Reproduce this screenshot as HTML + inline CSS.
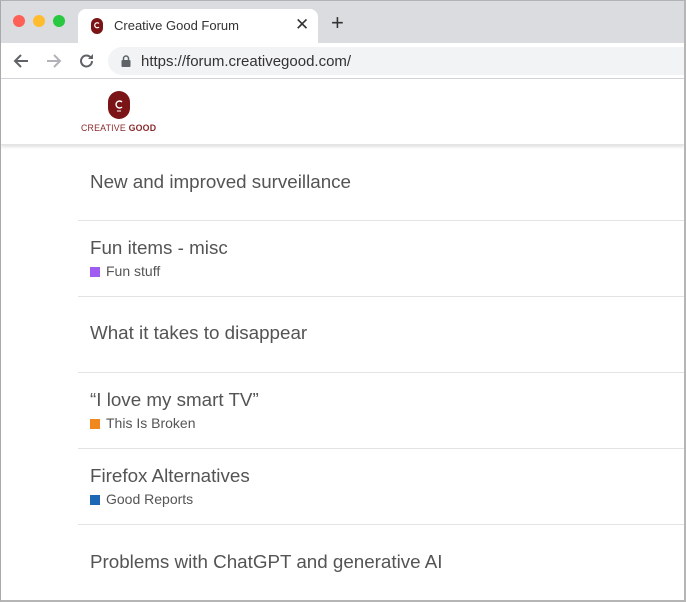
<!DOCTYPE html>
<html><head><meta charset="utf-8"><style>
*{margin:0;padding:0;box-sizing:border-box}
html,body{width:686px;height:602px;overflow:hidden;background:#fff;font-family:"Liberation Sans",Arial,sans-serif}
.win{position:absolute;left:0;top:0;width:686px;height:602px;border:1px solid #a9a9a9;border-top-color:#b0b2b5;border-bottom:2px solid #b5b5b5;border-right:2px solid #b5b5b5;overflow:hidden}
.tabbar{position:absolute;left:0;top:0;width:100%;height:42px;background:#dadce0}
.dot{position:absolute;top:14px;width:12px;height:12px;border-radius:50%}
.tab{position:absolute;left:77px;top:8px;width:240px;height:36px;background:#fff;border-radius:8px 8px 0 0}
.tab .t{position:absolute;left:36px;top:9px;font-size:13px;color:#333}
.tab .x{position:absolute;left:217px;top:6px;font-size:17px;color:#333}
.plus{position:absolute;left:330px;top:9px;font-size:22px;color:#333}
.toolbar{position:absolute;left:0;top:42px;width:100%;height:36px;background:#fff;border-bottom:1px solid #d4d4d8}
.url{position:absolute;left:107px;top:4px;width:600px;height:28px;border-radius:14px;background:#f1f3f4}
.url .t{position:absolute;left:33px;top:6px;font-size:15px;color:#333}
.hdr{position:absolute;left:0;top:78px;width:100%;height:66px;background:#fff;box-shadow:0 2px 3px rgba(0,0,0,.12);border-bottom:1px solid #e4e4e4}
.row{position:absolute;left:77px;width:620px;border-bottom:1px solid #e3e3e3}
.row .h{position:absolute;left:12px;font-size:18.8px;color:#545454}
.row .c{position:absolute;left:12px;font-size:14px;color:#555}
.row .c i{display:inline-block;width:10px;height:10px;margin-right:6px;vertical-align:-1px}
</style></head><body><div class="win">
<div class="tabbar">
<div class="dot" style="left:12px;background:#fe5f57"></div>
<div class="dot" style="left:32px;background:#febc2e"></div>
<div class="dot" style="left:52px;background:#28c840"></div>
<div class="tab">
<svg style="position:absolute;left:13px;top:9px" width="12" height="16"><rect x="0" y="0" width="12" height="16" rx="6" fill="#7a1416"/><path d="M8 5.5A2.5 2.5 0 1 0 8 9" stroke="#fff" stroke-width="1.2" fill="none"/></svg>
<span class="t">Creative Good Forum</span><span class="x">✕</span></div>
<span class="plus">+</span>
</div>
<div class="toolbar">
<svg style="position:absolute;left:11px;top:9px" width="18" height="18"><path d="M16 9H3M9 3L3 9l6 6" stroke="#5f6368" stroke-width="2" fill="none"/></svg>
<svg style="position:absolute;left:44px;top:9px" width="18" height="18"><path d="M2 9h13M9 3l6 6-6 6" stroke="#b0b3b7" stroke-width="2" fill="none"/></svg>
<svg style="position:absolute;left:77px;top:9px" width="18" height="18"><path d="M14 9a5.5 5.5 0 1 1-1.6-3.9" stroke="#5f6368" stroke-width="2" fill="none"/><path d="M15 2v5h-5z" fill="#5f6368"/></svg>
<div class="url"><svg style="position:absolute;left:13px;top:8px" width="10" height="12"><path d="M2.5 5V3.5a2.5 2.5 0 0 1 5 0V5" stroke="#5f6368" stroke-width="1.5" fill="none"/><rect x="0.5" y="5" width="9" height="7" rx="1" fill="#5f6368"/></svg><span class="t">https://forum.creativegood.com/</span></div>
</div>
<div class="hdr">
<svg style="position:absolute;left:107px;top:12px" width="22" height="28"><rect width="22" height="28" rx="11" fill="#7a1416"/><path d="M14 11a3.5 3.5 0 1 0 0 5" stroke="#fff" stroke-width="1.4" fill="none"/><path d="M9 20h4" stroke="#fff" stroke-width="1"/></svg>
<div style="position:absolute;left:80px;top:44px;font-size:8.8px;letter-spacing:.2px;color:#8a2a2d">CREATIVE <b>GOOD</b></div>
</div>
<div class="row" style="top:145px;height:75px"><div class="h" style="top:25px">New and improved surveillance</div></div>
<div class="row" style="top:220px;height:76px"><div class="h" style="top:16px">Fun items - misc</div><div class="c" style="top:42px"><i style="background:#9e5cf0"></i>Fun stuff</div></div>
<div class="row" style="top:296px;height:76px"><div class="h" style="top:25px">What it takes to disappear</div></div>
<div class="row" style="top:372px;height:76px"><div class="h" style="top:16px">“I love my smart TV”</div><div class="c" style="top:42px"><i style="background:#f0881f"></i>This Is Broken</div></div>
<div class="row" style="top:448px;height:76px"><div class="h" style="top:16px">Firefox Alternatives</div><div class="c" style="top:42px"><i style="background:#1d68b4"></i>Good Reports</div></div>
<div class="row" style="top:524px;height:76px;border:0"><div class="h" style="top:26px">Problems with ChatGPT and generative AI</div></div>
</div></body></html>
